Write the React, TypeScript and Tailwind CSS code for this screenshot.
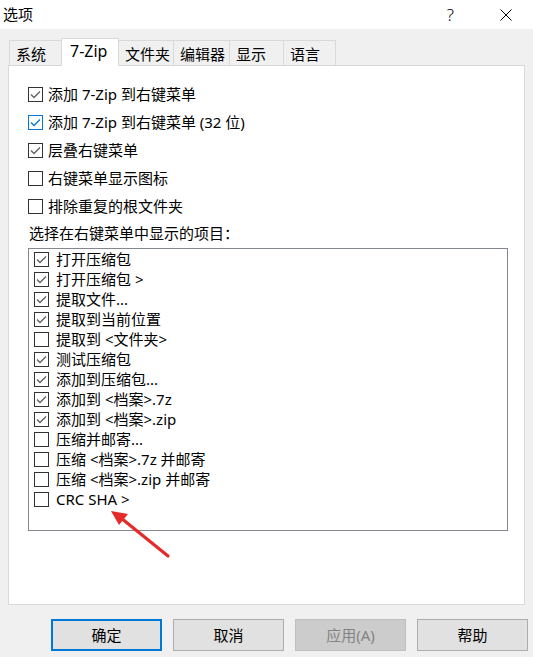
import { useState } from "react";

const font = { fontFamily: '"Noto Sans", "Noto Sans CJK SC", sans-serif' };

interface Item {
	label: string;
	checked: boolean;
}

const topOptions: (Item & { focus?: boolean })[] = [
	{ label: "添加 7-Zip 到右键菜单", checked: true },
	{ label: "添加 7-Zip 到右键菜单 (32 位)", checked: true, focus: true },
	{ label: "层叠右键菜单", checked: true },
	{ label: "右键菜单显示图标", checked: false },
	{ label: "排除重复的根文件夹", checked: false },
];

const menuItems: Item[] = [
	{ label: "打开压缩包", checked: true },
	{ label: "打开压缩包 >", checked: true },
	{ label: "提取文件...", checked: true },
	{ label: "提取到当前位置", checked: true },
	{ label: "提取到 <文件夹>", checked: false },
	{ label: "测试压缩包", checked: true },
	{ label: "添加到压缩包...", checked: true },
	{ label: "添加到 <档案>.7z", checked: true },
	{ label: "添加到 <档案>.zip", checked: true },
	{ label: "压缩并邮寄...", checked: false },
	{ label: "压缩 <档案>.7z 并邮寄", checked: false },
	{ label: "压缩 <档案>.zip 并邮寄", checked: false },
	{ label: "CRC SHA >", checked: false },
];

const tabs = [
	{ label: "系统", w: "w-[53px]" },
	{ label: "7-Zip", w: "w-[58px]" },
	{ label: "文件夹", w: "w-[56px]" },
	{ label: "编辑器", w: "w-[57px]" },
	{ label: "显示", w: "w-[55px]" },
	{ label: "语言", w: "w-[53px]" },
];

function CheckBox({ checked, focus }: { checked: boolean; focus?: boolean }) {
	return (
		<span
			className={`flex h-[15px] w-[15px] shrink-0 items-center justify-center border bg-white ${
				focus ? "border-[#0078d7]" : "border-[#333333]"
			}`}
		>
			{checked && (
				<svg width="11" height="9" viewBox="0 0 11 9">
					<polyline
						points="1,4.5 4,7.5 10,1.5"
						fill="none"
						stroke={focus ? "#0078d7" : "#5f5f5f"}
						strokeWidth="1.3"
					/>
				</svg>
			)}
		</span>
	);
}

export default function App() {
	const [active] = useState(1);

	return (
		<div
			className="relative flex h-[657px] w-[533px] flex-col overflow-hidden bg-[#f0f0f0] text-[15px] text-black"
			style={font}
		>
			{/* title bar */}
			<div className="flex h-[29px] items-center bg-white">
				<span className="pl-[3px] leading-none">选项</span>
				<span className="ml-auto mr-[46px] text-[17px] leading-none font-light">?</span>
				<svg className="mr-[21px]" width="12" height="12" viewBox="0 0 12 12">
					<path d="M0.5 0.5 L11.5 11.5 M11.5 0.5 L0.5 11.5" stroke="#000" strokeWidth="1" />
				</svg>
			</div>

			{/* tabs */}
			<div className="flex h-[36px] items-end pl-[10px]">
				{tabs.map((t, i) =>
					i === active ? (
						<div
							key={t.label}
							className={`relative z-10 -mb-px -ml-px flex h-[28px] items-start border border-b-0 border-[#d9d9d9] bg-white pl-[8px] pt-[2px] ${t.w}`}
						>
							<span className="text-[16px] leading-[20px]">{t.label}</span>
						</div>
					) : (
						<div
							key={t.label}
							className={`-ml-px flex h-[25px] items-center border border-b-0 border-[#d9d9d9] bg-[#f0f0f0] pl-[6px] pt-[3px] ${t.w}`}
						>
							<span className="leading-none">{t.label}</span>
						</div>
					),
				)}
			</div>

			{/* panel */}
			<div className="mx-[8px] flex h-[540px] flex-col border border-[#d9d9d9] bg-white pl-[19px] pt-[14px]">
				{topOptions.map((o) => (
					<div key={o.label} className="flex h-[28px] items-center gap-[5px]">
						<CheckBox checked={o.checked} focus={o.focus} />
						<span className="leading-none">{o.label}</span>
					</div>
				))}
				<div className="flex h-[26px] items-center pl-px">
					<span className="leading-none">选择在右键菜单中显示的项目：</span>
				</div>
				<div className="mt-[2px] flex h-[283px] w-[480px] flex-col border border-[#828790] bg-white pl-[5px]">
					{menuItems.map((m) => (
						<div key={m.label} className="flex h-[20px] shrink-0 items-center gap-[7px]">
							<CheckBox checked={m.checked} />
							<span className="leading-none">{m.label}</span>
						</div>
					))}
				</div>
			</div>

			{/* buttons */}
			<div className="mt-[14px] flex justify-end gap-[11px] pr-[5px]">
				<button className="h-[32px] w-[111px] border-2 border-[#0078d7] bg-[#e1e1e1]">确定</button>
				<button className="h-[32px] w-[111px] border border-[#adadad] bg-[#e1e1e1]">取消</button>
				<button className="h-[32px] w-[111px] border border-[#bfbfbf] bg-[#cccccc] text-[#838383]">
					应用(A)
				</button>
				<button className="h-[32px] w-[111px] border border-[#adadad] bg-[#e1e1e1]">帮助</button>
			</div>

			{/* red annotation arrow */}
			<svg className="pointer-events-none absolute left-0 top-0" width="533" height="657">
				<line x1="168" y1="556" x2="121" y2="518" stroke="#e52a2a" strokeWidth="3.2" strokeLinecap="round" />
				<polygon points="111,511 128,514 119,525" fill="#e52a2a" />
			</svg>
		</div>
	);
}
